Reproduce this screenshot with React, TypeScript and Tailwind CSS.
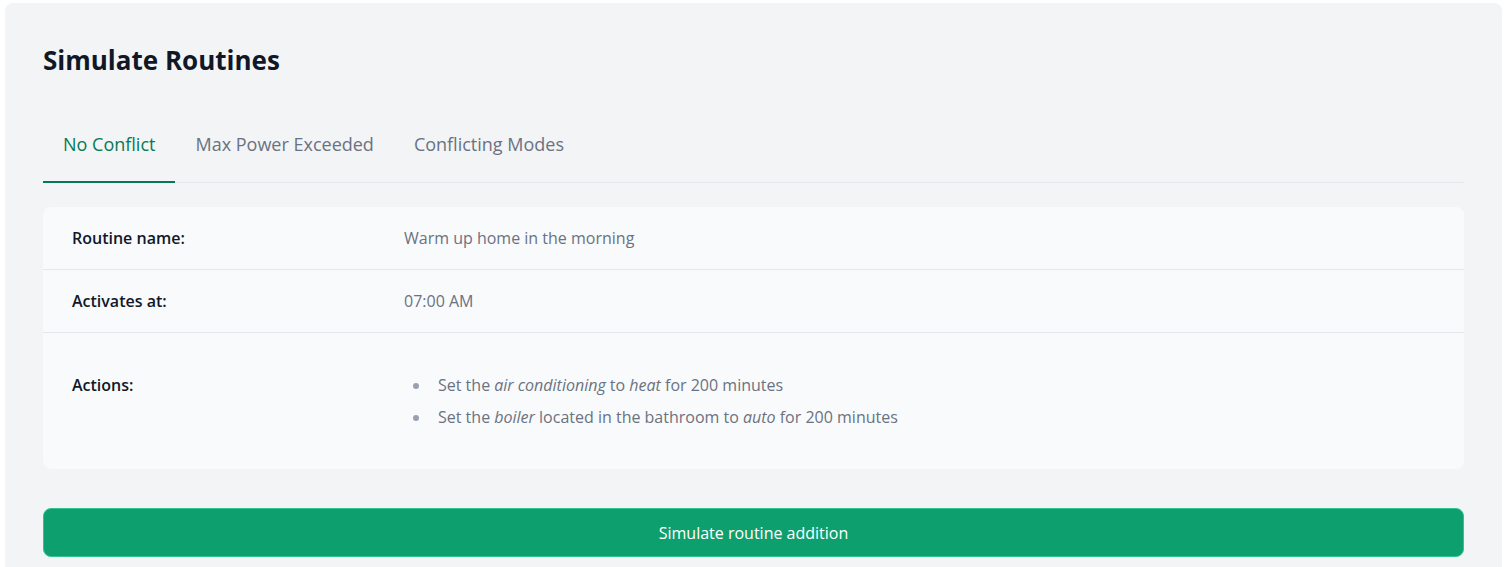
import { useState } from "react";

const tabs = ["No Conflict", "Max Power Exceeded", "Conflicting Modes"];

export default function App() {
  const [active, setActive] = useState(0);

  return (
    <div className="min-h-screen bg-white pt-[3px] px-[5px] font-['Open_Sans',sans-serif]">
      <div className="rounded-lg bg-[#f3f4f6] px-[38px] pt-[41px] pb-10">
        <h2 className="text-[26px] leading-8 font-bold text-gray-900">Simulate Routines</h2>

        <div className="mt-[30px] flex border-b border-gray-200">
          {tabs.map((t, i) => (
            <button
              key={t}
              onClick={() => setActive(i)}
              className={
                i === active
                  ? "-mb-px border-b-2 border-[#047857] px-5 pt-6 pb-[23px] text-lg leading-7 text-[#057a55]"
                  : "-mb-px border-b-2 border-transparent px-5 pt-6 pb-[23px] text-lg leading-7 text-gray-500"
              }
            >
              {t}
            </button>
          ))}
        </div>

        <div className="mt-6 rounded-lg bg-[#f9fafb] text-base">
          <div className="flex border-b border-gray-200 px-[29px] py-[19px] leading-6">
            <div className="w-[332px] font-semibold text-gray-900">Routine name:</div>
            <div className="text-gray-500">Warm up home in the morning</div>
          </div>
          <div className="flex border-b border-gray-200 px-[29px] py-[19px] leading-6">
            <div className="w-[332px] font-semibold text-gray-900">Activates at:</div>
            <div className="text-gray-500">07:00 AM</div>
          </div>
          <div className="flex px-[29px] py-9 leading-8">
            <div className="w-[332px] font-semibold text-gray-900">Actions:</div>
            <ul className="list-disc pl-[27px] text-gray-500 marker:text-gray-400">
              <li className="pl-[7px]">
                Set the <em>air conditioning</em> to <em>heat</em> for 200 minutes
              </li>
              <li className="pl-[7px]">
                Set the <em>boiler</em> located in the bathroom to <em>auto</em> for 200 minutes
              </li>
            </ul>
          </div>
        </div>

        <button className="mt-[39px] h-[49px] w-full rounded-lg border border-[#31c48d] bg-[#0e9f6e] text-base text-white">
          Simulate routine addition
        </button>
      </div>
    </div>
  );
}
